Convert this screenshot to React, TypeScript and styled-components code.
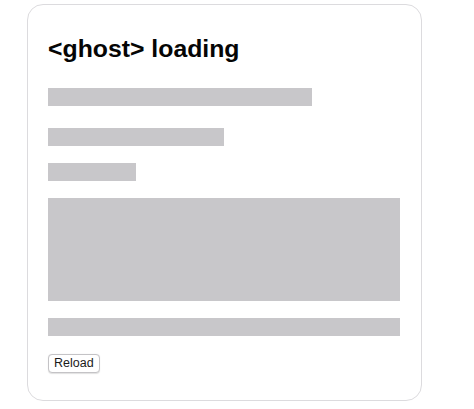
import React from "react";
import styled, { createGlobalStyle } from "styled-components";

const Global = createGlobalStyle`
  html, body {
    margin: 0;
    padding: 0;
    background: #ffffff;
    font-family: "Liberation Sans", Arial, sans-serif;
  }
`;

const Page = styled.div`
  padding: 4px 0 0 27px;
`;

const Card = styled.section`
  box-sizing: border-box;
  width: 395px;
  height: 397px;
  border: 1px solid #dcdbde;
  border-radius: 16px;
  padding: 30px 21px 0 20px;
  background: #ffffff;
  display: flex;
  flex-direction: column;
`;

const Title = styled.h2`
  margin: 0;
  font-size: 24.8px;
  line-height: 28px;
  font-weight: 700;
  color: #050505;
`;

const Ghost = styled.div<{ $w: string; $h?: number; $top: number }>`
  width: ${(p) => p.$w};
  height: ${(p) => p.$h ?? 18}px;
  margin-top: ${(p) => p.$top}px;
  background: #c8c7ca;
`;

const ReloadButton = styled.button`
  align-self: flex-start;
  margin-top: 18px;
  height: 19px;
  padding: 0 5px;
  border: 1px solid #c4c3c6;
  border-radius: 4px;
  background: #ffffff;
  box-shadow: 0 0.5px 1px rgba(0, 0, 0, 0.12);
  font-family: "Liberation Sans", Arial, sans-serif;
  font-size: 12.5px;
  line-height: 17px;
  color: #1a1a1a;
`;

export default function App() {
  return (
    <>
      <Global />
      <Page>
        <Card>
          <Title>&lt;ghost&gt; loading</Title>
          <Ghost $w="75%" $top={25} />
          <Ghost $w="50%" $top={22} />
          <Ghost $w="25%" $top={17} />
          <Ghost $w="100%" $h={103} $top={17} />
          <Ghost $w="100%" $top={17} />
          <ReloadButton>Reload</ReloadButton>
        </Card>
      </Page>
    </>
  );
}
